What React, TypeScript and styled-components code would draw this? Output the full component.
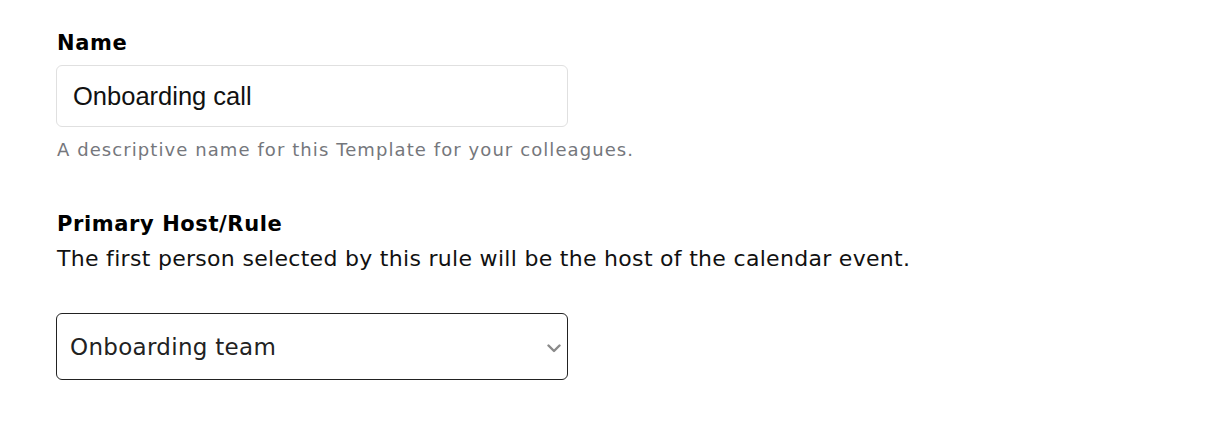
import React from "react";
import styled, { createGlobalStyle } from "styled-components";

const GlobalStyle = createGlobalStyle`
  html, body { margin: 0; padding: 0; background: #ffffff; }
  body { font-family: "DejaVu Sans", "Noto Sans", sans-serif; color: #111; }
`;

const Page = styled.div`
  padding: 29px 56px 0 56px;
  display: flex;
  flex-direction: column;
`;

const Field = styled.div<{ $gap?: number }>`
  display: flex;
  flex-direction: column;
  margin-bottom: ${(p) => p.$gap ?? 0}px;
`;

const Label = styled.label`
  font-family: "DejaVu Sans", sans-serif;
  font-weight: 700;
  font-size: 21px;
  letter-spacing: 0.6px;
  line-height: 28px;
  color: #000;
  margin-left: 1px;
`;

const TextInput = styled.input`
  box-sizing: border-box;
  width: 512px;
  height: 62px;
  margin-top: 8px;
  padding: 0 16px;
  border: 1px solid #e0e0e0;
  border-radius: 6px;
  font-family: "Liberation Sans", Arial, sans-serif;
  font-size: 25.5px;
  color: #111;
  background: #fff;
  outline: none;
`;

const Help = styled.div`
  margin-top: 11px;
  margin-left: 1px;
  font-size: 18px;
  letter-spacing: 1.08px;
  line-height: 24px;
  color: #75777c;
`;

const Description = styled.div`
  margin-top: 7px;
  margin-left: 1px;
  font-size: 22px;
  letter-spacing: 0.3px;
  line-height: 28px;
  color: #111;
`;

const SelectWrap = styled.div`
  position: relative;
  width: 512px;
  margin-top: 40px;
`;

const Select = styled.select`
  box-sizing: border-box;
  width: 512px;
  height: 67px;
  padding: 0 40px 0 13px;
  border: 1px solid #222;
  border-radius: 6px;
  font-family: "DejaVu Sans", sans-serif;
  font-size: 23px;
  letter-spacing: 0.3px;
  color: #222;
  background: #fff;
  appearance: none;
  -webkit-appearance: none;
  outline: none;
`;

const Chevron = styled.svg`
  position: absolute;
  right: 7px;
  top: 31px;
  pointer-events: none;
`;

export default function App() {
  return (
    <>
      <GlobalStyle />
      <Page>
        <Field $gap={48}>
          <Label>Name</Label>
          <TextInput defaultValue="Onboarding call" />
          <Help>A descriptive name for this Template for your colleagues.</Help>
        </Field>
        <Field>
          <Label>Primary Host/Rule</Label>
          <Description>
            The first person selected by this rule will be the host of the calendar event.
          </Description>
          <SelectWrap>
            <Select defaultValue="onboarding">
              <option value="onboarding">Onboarding team</option>
            </Select>
            <Chevron width="14" height="9" viewBox="0 0 14 9">
              <path d="M1.5 1.5 L7 7 L12.5 1.5" fill="none" stroke="#8a8a8a" strokeWidth="2.4" strokeLinecap="round" strokeLinejoin="round" />
            </Chevron>
          </SelectWrap>
        </Field>
      </Page>
    </>
  );
}
